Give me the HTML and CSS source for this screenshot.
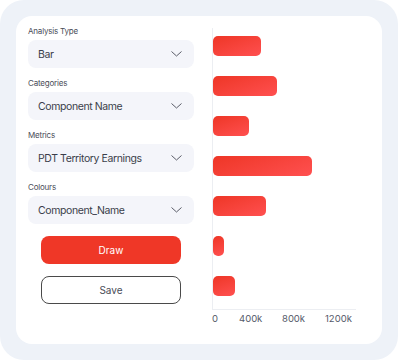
FILE: index.html
```html
<!DOCTYPE html>
<html lang="en">
<head>
  <meta charset="UTF-8">
  <title>Analysis</title>
  <link rel="stylesheet" href="styles.css">
</head>
<body>
  <div class="panel">
    <div class="card">
      <form class="controls" autocomplete="off">
        <div class="field">
          <label class="field-label">Analysis Type</label>
          <div class="select"><span>Bar</span><svg class="chevron" viewBox="0 0 11 6"><path d="M0.5 0.5 L5.5 5 L10.5 0.5"/></svg></div>
        </div>
        <div class="field">
          <label class="field-label">Categories</label>
          <div class="select"><span>Component Name</span><svg class="chevron" viewBox="0 0 11 6"><path d="M0.5 0.5 L5.5 5 L10.5 0.5"/></svg></div>
        </div>
        <div class="field">
          <label class="field-label">Metrics</label>
          <div class="select"><span>PDT Territory Earnings</span><svg class="chevron" viewBox="0 0 11 6"><path d="M0.5 0.5 L5.5 5 L10.5 0.5"/></svg></div>
        </div>
        <div class="field">
          <label class="field-label">Colours</label>
          <div class="select"><span>Component_Name</span><svg class="chevron" viewBox="0 0 11 6"><path d="M0.5 0.5 L5.5 5 L10.5 0.5"/></svg></div>
        </div>
        <div class="actions">
          <button type="button" class="btn btn-primary">Draw</button>
          <button type="button" class="btn btn-outline">Save</button>
        </div>
      </form>
      <div class="chart">
        <div class="plot">
          <div class="bar" style="width:48px"></div>
          <div class="bar" style="width:64px"></div>
          <div class="bar" style="width:36px"></div>
          <div class="bar" style="width:99px"></div>
          <div class="bar" style="width:53px"></div>
          <div class="bar" style="width:11px"></div>
          <div class="bar" style="width:22px"></div>
        </div>
        <div class="ticks">
          <span>0</span>
          <span>400k</span>
          <span>800k</span>
          <span>1200k</span>
        </div>
      </div>
    </div>
  </div>
</body>
</html>
```

FILE: styles.css
```css
body {
  font-family: 'Inter', 'Segoe UI', Arial, sans-serif;
  background: #fff;
  color: #333;
  margin: 0;
  padding: 0;
}
.panel {
  width: 398px;
  height: 360px;
  background: #eef2f8;
  border-radius: 24px;
  padding: 16px;
  box-sizing: border-box;
}
.card {
  background: #fff;
  border-radius: 16px;
  height: 100%;
  padding: 9px 12px 0 12px;
  box-sizing: border-box;
  display: flex;
  gap: 19px;
}
.controls {
  width: 166px;
  display: flex;
  flex-direction: column;
  gap: 9px;
  margin: 0;
}
.field-label {
  display: block;
  font-size: 8px;
  line-height: 12px;
  letter-spacing: -0.2px;
  color: #4a4d58;
  margin-bottom: 3px;
}
.select {
  height: 28px;
  background: #f4f5fa;
  border-radius: 8px;
  padding: 0 12px 0 10px;
  display: flex;
  align-items: center;
  justify-content: space-between;
  font-size: 10.5px;
  letter-spacing: -0.4px;
  color: #3b3e4a;
}
.chevron {
  width: 11px;
  height: 6px;
  fill: none;
  stroke: #5a5d68;
  stroke-width: 1;
}
.actions {
  display: flex;
  flex-direction: column;
  gap: 12px;
  margin-top: 3px;
  padding: 0 13px;
}
.btn {
  height: 28px;
  border-radius: 8px;
  font-family: inherit;
  font-size: 10px;
  cursor: pointer;
}
.btn-primary {
  background: #ef3727;
  color: #fff;
  border: none;
}
.btn-outline {
  background: #fff;
  color: #4a4d58;
  border: 1px solid #4a4a4a;
}
.chart {
  margin-top: 3px;
  width: 143px;
}
.plot {
  height: 282px;
  border-left: 1px solid #eceef2;
  border-bottom: 1px solid #eceef2;
  box-sizing: border-box;
  padding-top: 8px;
  display: flex;
  flex-direction: column;
  gap: 20px;
  margin-left: -1px;
}
.bar {
  height: 20px;
  border-radius: 5px;
  background: linear-gradient(160deg, #ee3626 0%, #ff5050 100%);
}
.ticks {
  display: grid;
  grid-template-columns: 27px 43px 43px auto;
  font-size: 9.5px;
  line-height: 12px;
  color: #555a6a;
  margin-top: 3px;
  margin-left: -1px;
}
```
